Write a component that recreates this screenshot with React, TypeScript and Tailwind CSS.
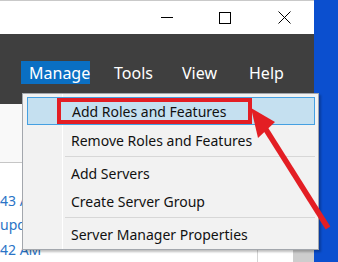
import React from "react";

const font = { fontFamily: '"Noto Sans", "Open Sans", sans-serif' };

function MenuRow({ label, active }: { label: string; active?: boolean }) {
  return (
    <div
      className={`h-[28px] flex items-center pl-[44px] text-[14px] text-[#111] ${
        active ? "h-[27px] mb-[1px] bg-[#c5e0f0] border border-[#45a0e2] pl-[43px]" : ""
      }`}
    >
      {label}
    </div>
  );
}

function Sep() {
  return (
    <div className="h-[5px] pt-[2px] pl-[38px]">
      <div className="h-px bg-[#d7d7d7]" />
    </div>
  );
}

export default function App() {
  return (
    <div className="relative w-[338px] h-[262px] overflow-hidden bg-[#0b4fcf]" style={font}>
      {/* window */}
      <div className="w-[314px] h-full flex flex-col bg-white">
        {/* title bar */}
        <div className="h-[39px] flex justify-end border-t border-[#c9c9c9] bg-white">
          <div className="w-[58px] flex items-center justify-center">
            <div className="w-[12px] h-px bg-black" />
          </div>
          <div className="w-[58px] flex items-center justify-center">
            <div className="w-[12px] h-[12px] border border-black" />
          </div>
          <div className="w-[60px] flex items-center justify-center">
            <svg width="13" height="13" viewBox="0 0 13 13">
              <path d="M0.5 0.5 L12.5 12.5 M12.5 0.5 L0.5 12.5" stroke="#000" strokeWidth="1" />
            </svg>
          </div>
        </div>

        {/* menu bar */}
        <div className="h-[75px] bg-[#3f3f3f] flex items-start pt-[27px] text-[16px] text-white">
          <div className="ml-[21px] w-[69px] h-[23px] px-[8px] flex items-center bg-[#0a6fc3]">Manage</div>
          <div className="ml-[24px] w-[68px] h-[23px] flex items-center">Tools</div>
          <div className="w-[67px] h-[23px] flex items-center">View</div>
          <div className="h-[23px] flex items-center">Help</div>
        </div>

        {/* content */}
        <div className="flex-1 flex bg-[#fafafa]">
          <div className="w-[258px] border-r border-[#d4d4d4] flex flex-col bg-white">
            <div className="h-[59px] border-b border-[#c6c6c6] bg-[#f9f9f9]" />
            <div className="pt-[26px] text-[14px] leading-[24.5px] text-[#2a74c6] whitespace-nowrap">
              <div>43 AM</div>
              <div>updates</div>
              <div>42 AM</div>
            </div>
          </div>
          <div className="w-[35px] bg-white" />
          <div className="flex-1 bg-[#cdcdcd]" />
        </div>
      </div>

      {/* dropdown */}
      <div className="absolute left-[22px] top-[93px] w-[297px] h-[157px] bg-[#f2f2f2] border border-[#a3a7ad] shadow-[2px_2px_2px_rgba(0,0,0,0.25)]">
        <div className="absolute left-[39px] top-0 bottom-0 w-px bg-[#dedede] border-r border-white" />
        <div className="relative pt-[3px] pl-[4px] pr-[3px]">
          <MenuRow label="Add Roles and Features" active />
          <MenuRow label="Remove Roles and Features" />
          <Sep />
          <MenuRow label="Add Servers" />
          <MenuRow label="Create Server Group" />
          <Sep />
          <MenuRow label="Server Manager Properties" />
        </div>
      </div>

      {/* annotation */}
      <div className="absolute left-[57px] top-[98px] w-[195px] h-[26px] border-4 border-[#e31e24]" />
      <svg className="absolute left-0 top-0" width="338" height="262" viewBox="0 0 338 262">
        <line x1="265" y1="128" x2="328" y2="228" stroke="#e31e24" strokeWidth="5.5" />
        <polygon points="251,108 275,122 258,138" fill="#e31e24" />
      </svg>
    </div>
  );
}
